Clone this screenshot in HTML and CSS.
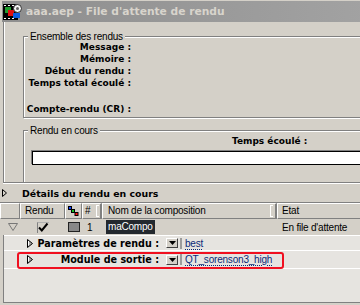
FILE: index.html
```html
<!DOCTYPE html>
<html lang="fr">
<head>
<meta charset="utf-8">
<title>File d'attente de rendu</title>
<link rel="stylesheet" href="styles.css">
</head>
<body>
<div class="window">
  <div class="titlebar">
    <svg class="app-icon" width="19" height="16" viewBox="0 0 19 16">
      <rect x="0" y="0" width="15" height="16" fill="#000"/>
      <rect x="1" y="1" width="2" height="1" fill="#fff"/>
      <rect x="5" y="1" width="2" height="1" fill="#fff"/>
      <rect x="9" y="1" width="2" height="1" fill="#fff"/>
      <rect x="1" y="14" width="2" height="1" fill="#fff"/>
      <rect x="5" y="14" width="2" height="1" fill="#fff"/>
      <rect x="9" y="14" width="2" height="1" fill="#fff"/>
      <rect x="2" y="3" width="6" height="6" fill="#1f9a2c"/>
      <rect x="5" y="6" width="6" height="6" fill="#e01010"/>
      <rect x="10" y="9" width="7" height="5" fill="#1060e0"/>
      <circle cx="14.5" cy="4.5" r="4" fill="#f4f4f4" stroke="#303030" stroke-width="1"/>
      <circle cx="14.5" cy="4.5" r="1.5" fill="#606060"/>
    </svg>
    <span class="title">aaa.aep - File d'attente de rendu</span>
  </div>

  <div class="top-panel">
    <div class="group">
      <div class="legend"><span>Ensemble des rendus</span></div>
      <div class="summary">
        <div class="lbl">Message :</div>
        <div class="lbl">Mémoire :</div>
        <div class="lbl">Début du rendu :</div>
        <div class="lbl">Temps total écoulé :</div>
        <div class="lbl gap">Compte-rendu (CR) :</div>
      </div>
    </div>
    <div class="group group-current">
      <div class="legend"><span>Rendu en cours</span></div>
      <div class="current">
        <div class="elapsed">Temps écoulé :</div>
        <div class="progress"></div>
      </div>
    </div>
  </div>

  <div class="details-toggle">
    <svg class="tri-details" width="5" height="8" viewBox="0 0 5 8"><polygon points="0.5,0.5 4.5,4 0.5,7.5" fill="#d4d0c8" stroke="#000"/></svg>
    <span class="details-label">Détails du rendu en cours</span>
  </div>

  <div class="queue">
    <div class="qhead">
      <div class="hcell"></div>
      <div class="hcell pad-rendu">Rendu</div>
      <div class="hcell icon-cell">
        <svg width="11" height="10" viewBox="0 0 11 10">
          <path d="M2 2 L5 5 L8.5 8" stroke="#000" stroke-width="1" fill="none"/>
          <rect x="0.5" y="0.5" width="3" height="3" fill="#1040ff" stroke="#000"/>
          <rect x="3.5" y="3.5" width="3" height="3" fill="#10c020" stroke="#000"/>
          <rect x="7" y="6.5" width="3" height="3" fill="#ff1010" stroke="#000"/>
        </svg>
      </div>
      <div class="hcell pad-num grip-cell">#<span class="grip g1"></span></div>
      <div class="hcell pad-name grip-cell">Nom de la composition<span class="grip g2"></span></div>
      <div class="hcell pad-etat">Etat</div>
    </div>

    <div class="qrow">
      <div class="c0">
        <svg width="10" height="8" viewBox="0 0 10 8"><polygon points="0.5,0.5 9.5,0.5 5,7.5" fill="none" stroke="#777"/></svg>
      </div>
      <div class="c1">
        <span class="checkbox">
          <svg width="12" height="11" viewBox="0 0 12 11"><path d="M2 5.5 L4.8 8.5 L10.5 1.5" stroke="#000" stroke-width="2" fill="none"/></svg>
        </span>
      </div>
      <div class="c2"><span class="swatch"></span></div>
      <div class="c3">1</div>
      <div class="c4"><span class="comp-name">maCompo</span></div>
      <div class="c5">En file d'attente</div>
    </div>

    <div class="qbody">
      <div class="sub sub1">
        <svg class="tri-sub" width="6" height="9" viewBox="0 0 6 9"><polygon points="0.5,0.5 5.5,4.5 0.5,8.5" fill="#a8a8a8" stroke="#000"/><path d="M1.5 2 L1.5 6.5" stroke="#fff"/></svg>
        <span class="sub-label">Paramètres de rendu :</span>
        <span class="dropbtn"><svg width="7" height="4" viewBox="0 0 7 4"><polygon points="0,0 7,0 3.5,4" fill="#000"/></svg></span>
        <span class="field"><span class="link">best</span></span>
      </div>
      <div class="sub sub2">
        <svg class="tri-sub" width="6" height="9" viewBox="0 0 6 9"><polygon points="0.5,0.5 5.5,4.5 0.5,8.5" fill="#a8a8a8" stroke="#000"/><path d="M1.5 2 L1.5 6.5" stroke="#fff"/></svg>
        <span class="sub-label">Module de sortie :</span>
        <span class="dropbtn"><svg width="7" height="4" viewBox="0 0 7 4"><polygon points="0,0 7,0 3.5,4" fill="#000"/></svg></span>
        <span class="field"><span class="link">QT_sorenson3_high</span></span>
        <span class="highlight"></span>
      </div>
    </div>
  </div>
</div>
</body>
</html>
```
FILE: styles.css
```css
* { box-sizing: border-box; }
html, body { margin: 0; padding: 0; }
body {
  background: #d4d0c8;
  font-family: "Liberation Sans", Arial, sans-serif;
  font-size: 10px;
  letter-spacing: -0.2px;
  color: #000;
}
.window {
  width: 360px;
  height: 305px;
  overflow: hidden;
  padding-top: 1px;
  border-top: 0;
}

/* title bar */
.titlebar {
  width: 400px;
  height: 21px;
  margin-left: 2px;
  padding-left: 1px;
  display: flex;
  align-items: center;
  background: linear-gradient(90deg, #8e8e8e, #a4a4a4);
}
.app-icon { flex: none; }
.title {
  margin-left: 4px;
  font-family: "DejaVu Sans", sans-serif;
  font-weight: bold;
  font-size: 10.7px;
  letter-spacing: 0;
  color: #d8d4cc;
  white-space: nowrap;
}

/* top panel */
.top-panel {
  width: 400px;
  height: 161px;
  margin-left: 3px;
  overflow: hidden;
  border-left: 1px solid #808080;
  border-bottom: 1px solid #808080;
  box-shadow: inset 1px 0 0 #fff, 0 1px 0 #fff;
}
.group {
  width: 420px;
  margin: 14px 0 0 19px;
  border: 1px solid #808080;
  box-shadow: inset 1px 1px 0 #fff, 1px 1px 0 #fff;
}
.group-current { margin-top: 12px; padding-bottom: 40px; }
.legend {
  display: flex;
  align-items: center;
  height: 0;
  margin-left: 4px;
}
.legend span {
  background: #d4d0c8;
  padding: 0 2px;
  line-height: 12px;
  white-space: nowrap;
}
.summary { padding: 4px 0 2px; }
.lbl, .elapsed {
  font-family: "DejaVu Sans", sans-serif;
  font-weight: bold;
  font-size: 9px;
  letter-spacing: 0;
  line-height: 12px;
  height: 12px;
  white-space: nowrap;
}
.lbl { width: 107px; text-align: right; }
.lbl.gap { margin-top: 14px; }
.current { padding-top: 4px; }
.elapsed { margin-left: 208px; }
.progress {
  width: 400px;
  height: 14px;
  margin: 4px 0 0 8px;
  background: #fff;
  border: 1px solid #000;
  box-shadow: -1px -1px 0 #808080;
}

/* details toggle */
.details-toggle {
  height: 18px;
  margin-top: 1px;
  padding-left: 2px;
  display: flex;
  align-items: center;
}
.tri-details { flex: none; }
.details-label {
  margin-left: 15px;
  font-family: "DejaVu Sans", sans-serif;
  font-weight: bold;
  font-size: 9.4px;
  letter-spacing: 0;
  white-space: nowrap;
}

/* queue */
.queue { border-top: 1px solid #808080; width: 400px; }
.qhead, .qrow {
  display: grid;
  grid-template-columns: 20px 45px 17px 20px 175px 123px;
}
.hcell {
  height: 16px;
  border: 1px solid;
  border-color: #fff #808080 #808080 #fff;
  display: flex;
  align-items: center;
  line-height: 12px;
  white-space: nowrap;
}
.pad-rendu { padding-left: 4px; }
.icon-cell { padding-left: 2px; }
.pad-num { padding-left: 2px; }
.pad-name { padding-left: 5px; }
.pad-etat { padding-left: 4px; }
.grip-cell { border-right-width: 2px; }
.grip {
  margin-left: auto;
  width: 3px;
  height: 12px;
  border: 1px solid #fff;
  border-right: 0;
}
.g1 { margin-right: 1px; }
.g2 { margin-right: 2px; }

.qrow { height: 16px; }
.qrow > div { display: flex; align-items: center; white-space: nowrap; }
.c0 { padding-left: 8px; }
.c1, .c2 { justify-content: center; }
.checkbox {
  display: flex;
  width: 12px;
  height: 11px;
  border-left: 1px solid #808080;
  border-top: 1px solid #b0b0b0;
}
.checkbox svg { margin-left: -1px; margin-top: -1px; }
.swatch {
  width: 12px;
  height: 10px;
  background: #888;
  border: 1px solid #222;
}
.c3 { padding-left: 5px; }
.c4 { padding-left: 4px; }
.comp-name {
  background: #23282e;
  color: #fff;
  line-height: 14px;
  padding: 0 2px;
}
.c5 { padding-left: 5px; }

.qbody {
  height: 68px;
  margin-left: 3px;
  background: #e6e4e0;
  border-left: 1px solid #808080;
  border-bottom: 1px solid #808080;
}
.sub {
  display: flex;
  align-items: center;
  padding-left: 23px;
  border-bottom: 1px solid #fff;
  white-space: nowrap;
}
.sub1 { height: 16px; border-top: 1px solid #fff; }
.sub2 { height: 18px; position: relative; }
.tri-sub { flex: none; }
.sub-label {
  width: 126px;
  margin-left: 0;
  text-align: right;
  font-family: "DejaVu Sans", sans-serif;
  font-weight: bold;
  font-size: 9.6px;
  letter-spacing: 0;
}
.dropbtn {
  flex: none;
  display: flex;
  align-items: center;
  justify-content: center;
  width: 12px;
  height: 10px;
  margin-left: 7px;
  background: #d4d0c8;
  border: 1px solid;
  border-color: #fff #404040 #404040 #fff;
}
.field {
  margin-left: 2px;
  height: 11px;
  padding-left: 3px;
  border-left: 2px solid #9c9c9c;
  display: flex;
  align-items: center;
}
.link {
  color: #0c2a78;
  text-decoration: underline dotted;
  text-underline-offset: 2px;
  line-height: 11px;
}
.highlight {
  position: absolute;
  left: 13px;
  top: 1px;
  width: 267px;
  height: 17px;
  border: 2px solid #f01020;
  border-radius: 3px;
}
```
